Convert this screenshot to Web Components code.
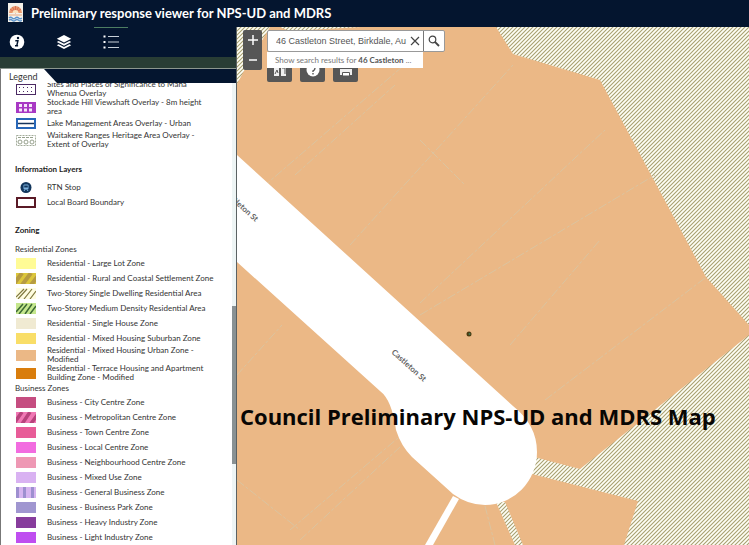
<!DOCTYPE html>
<html lang="en">
<head>
<meta charset="utf-8">
<title>Preliminary response viewer for NPS-UD and MDRS</title>
<style>
html, body { margin: 0; height: 100%; }
body { font-family: Lato, "Open Sans", sans-serif; color: #333; overflow: hidden; }
</style>
</head>
<body>
<map-viewer></map-viewer>
<script>
const define = (name, html, setup) => {
  const template = document.createElement('template');
  template.innerHTML = `<style>*{box-sizing:border-box}button{border:0;padding:0;margin:0;font:inherit;color:inherit;cursor:pointer}</style>` + html;
  customElements.define(name, class extends HTMLElement {
    connectedCallback() {
      if (this.shadowRoot) return;
      this.attachShadow({ mode: 'open' }).append(template.content.cloneNode(true));
      if (setup) setup(this, this.shadowRoot);
    }
  });
};

define('app-header', `
<style>
:host { display: flex; align-items: center; gap: 8px; height: 27px; padding: 0 8px; background: #04152f; color: #fff; }
h1 { margin: 0; font-size: 13px; line-height: 20px; font-weight: 700; white-space: nowrap; padding-bottom: 2px; }
svg { width: 15px; height: 19px; display: block; margin-bottom: 3px; }
</style>
<svg viewBox="0 0 15 19" aria-hidden="true">
  <rect width="15" height="19" fill="#f5f1ea"/>
  <path d="M1 10a6.500 7 0 0 1 13 0z" fill="#eb9a6c"/>
  <path d="M7.500 10V3M7.500 10 2 6M7.500 10 13 6M7.500 10 4.500 4M7.500 10l3-6" stroke="#cf5b4a" stroke-width=".7"/>
  <path d="M4.500 10a3 3 0 0 1 6 0z" fill="#fbe3c0"/>
  <path d="M1 11h13v2H1z" fill="#efcdb4"/>
  <path d="M1 15q1.600-1.500 3.200 0t3.200 0 3.200 0 3.200 0M1 17.200q1.600-1.500 3.200 0t3.200 0 3.200 0 3.200 0" fill="none" stroke="#5b93cc" stroke-width="1.500"/>
</svg>
<h1><slot></slot></h1>`);

define('panel-tabs', `
<style>
:host { display: flex; flex-wrap: nowrap; gap: 13px; height: 30px; background: #04152f; color: #fff; }
button { width: 34px; background: none; display: grid; place-items: center; border-top: 1px solid transparent; }
button[aria-selected=true] { border-top-color: #4d7d62; }
svg { width: 16px; height: 16px; display: block; margin-bottom: 2px; }
</style>
<button role="tab" aria-label="About" aria-selected="false"><svg viewBox="0 0 16 16"><circle cx="8" cy="8" r="7.300" fill="#fff"/><circle cx="9" cy="4" r="1.200" fill="#04152f"/><path d="M6.300 6.800h2.600L7.800 11.700h1.300M6 11.700h1.800" fill="none" stroke="#04152f" stroke-width="1.500"/></svg></button>
<button role="tab" aria-label="Layers" aria-selected="false"><svg viewBox="0 0 16 16" fill="#fff"><path d="M8 1l7.200 3.700L8 8.400.8 4.700z"/><path d="M2.600 7 8 9.800 13.400 7l1.800 1L8 11.700.8 8z"/><path d="M2.600 10.200 8 13l5.400-2.800 1.800 1L8 15 .8 11.200z"/></svg></button>
<button role="tab" aria-label="Legend" aria-selected="true"><svg viewBox="0 0 16 16"><path d="M.5 1.500h2v2h-2zM.5 7h2v2h-2zM.5 12.500h2v2h-2z" fill="#fff"/><path d="M5 2.500h11M5 8h11M5 13.500h11" stroke="#c8d0d8" stroke-width="1.200"/></svg></button>`);

const swatches = {
  places: `<rect x=".5" y=".5" width="19" height="10" fill="#fff" stroke="#4b2a63"/><path d="M3 3.500h15M3 7.500h15" stroke="#4b2a63" stroke-width="1" stroke-dasharray="1 3"/>`,
  stockade: `<rect width="20" height="11" fill="#a838c4"/><path d="M3 2h3v3H3zM8 2h3v3H8zM13 2h3v3h-3zM3 6.500h3v3H3zM8 6.500h3v3H8zM13 6.500h3v3h-3z" fill="#f6e6fa"/>`,
  lake: `<rect x="1" y="1" width="18" height="9" fill="#fff" stroke="#2867b8" stroke-width="2"/><path d="M2 5.500h16" stroke="#16345c" stroke-width="1.500"/>`,
  ranges: `<rect x=".5" y=".5" width="19" height="10" fill="#fff" stroke="#a3ac9a" stroke-dasharray="2 1"/><g fill="none" stroke="#96a08c"><circle cx="4" cy="7" r="2"/><circle cx="10" cy="7" r="2"/><circle cx="16" cy="7" r="2"/><path d="M2 2.500h16" stroke-dasharray="3 1"/></g>`,
  stop: `<circle cx="10" cy="5.500" r="5.500" fill="#12365c"/><rect x="7.500" y="2.500" width="5" height="5" rx="1" fill="#7fb4e0"/><path d="M8.200 3.500h3.600v2H8.200z" fill="#12365c"/><path d="M8 9l1-1.500M12 9l-1-1.500" stroke="#7fb4e0"/>`,
  board: `<rect x="1" y="1" width="18" height="9" fill="#fff" stroke="#5a1a26" stroke-width="2"/>`,
  rural: `<rect width="20" height="11" fill="#dcc63c"/><path d="M-2 11 6 0M6 12 15 0M15 12 22 3" stroke="#b69b42" stroke-width="4"/>`,
  single: `<rect width="20" height="11" fill="#fffde0"/><path d="M0 9 8 1M2 11 11 1M8 11 16 1M14 11l6-8" stroke="#80793f" stroke-width="1.200"/>`,
  medium: `<rect width="20" height="11" fill="#c5e78d"/><path d="M0 9 7 1M3 11 11 1M9 11 16 1M14 11l6-8" stroke="#3d6a35" stroke-width="1.500"/>`,
  metro: `<rect width="20" height="11" fill="#f078b4"/><path d="M-1 10 6 0M6 12 14 0M14 13 22 2" stroke="#b8427c" stroke-width="3.500"/>`,
  general: `<rect width="20" height="11" fill="#d6b4f0"/><path d="M1.500 0v11M8.500 0v11M16.500 0v11" stroke="#9e8fd0" stroke-width="3"/>`
};

define('legend-item', `
<style>
:host { display: grid; grid-template-columns: 20px minmax(0, 1fr); column-gap: 11px; align-items: center; min-height: 15px; }
svg { display: block; width: 20px; height: 11px; }
span { font-size: 8px; line-height: 9px; white-space: pre-line; }
</style>
<svg viewBox="0 0 20 11" aria-hidden="true"></svg><span><slot></slot></span>`, (host, root) => {
  const s = host.getAttribute('swatch');
  root.querySelector('svg').innerHTML = swatches[s] || `<rect width="20" height="11" fill="${s}"/>`;
});

define('legend-group', `
<style>
:host { display: block; }
h2, h3 { margin: 0 0 0 -1px; font-size: 8px; line-height: 13px; font-weight: 400; }
h2 { font-weight: 700; color: #222; }
</style>
<slot></slot>`, (host, root) => {
  const h = document.createElement(host.getAttribute('level') || 'h3');
  h.textContent = host.getAttribute('label');
  root.insertBefore(h, root.querySelector('slot'));
});

define('legend-panel', `
<style>
:host { position: relative; display: flex; min-height: 0; background: #fff; border-left: 1px solid #777; border-top: 1px solid #8c968f; }
.list { flex: 1; min-width: 0; padding: 11px 15px 0; overflow: hidden; }
.layers { margin: 14px 0; }
.zoning { margin-bottom: 6px; }
.tab { position: absolute; inset: 0 0 auto; height: 14px; background: #04152f; }
.tab h2 { margin: 0; width: 56px; height: 14px; padding: 2px 8px 0; background: #fff; clip-path: polygon(0 0, 43px 0, 56px 100%, 0 100%); font-size: 9px; line-height: 12px; font-weight: 400; }
.bar { width: 4px; display: flex; flex-direction: column; background: #eef5f5; }
.bar i:nth-child(1) { flex: 237; }
.bar i:nth-child(2) { flex: 158; background: #899193; }
.bar i:nth-child(3) { flex: 81; }
</style>
<div class="list">
  <legend-item swatch="places">Sites and Places of Significance to Mana
Whenua Overlay</legend-item>
  <legend-item swatch="stockade">Stockade Hill Viewshaft Overlay - 8m height
area</legend-item>
  <legend-item swatch="lake">Lake Management Areas Overlay - Urban</legend-item>
  <legend-item swatch="ranges">Waitakere Ranges Heritage Area Overlay -
Extent of Overlay</legend-item>
  <legend-group class="layers" level="h2" label="Information Layers">
    <div style="height:4px"></div>
    <legend-item swatch="stop">RTN Stop</legend-item>
    <legend-item swatch="board">Local Board Boundary</legend-item>
  </legend-group>
  <legend-group class="zoning" level="h2" label="Zoning"></legend-group>
  <legend-group label="Residential Zones">
    <legend-item swatch="#fffb96">Residential - Large Lot Zone</legend-item>
    <legend-item swatch="rural">Residential - Rural and Coastal Settlement Zone</legend-item>
    <legend-item swatch="single">Two-Storey Single Dwelling Residential Area</legend-item>
    <legend-item swatch="medium">Two-Storey Medium Density Residential Area</legend-item>
    <legend-item swatch="#f0ead2">Residential - Single House Zone</legend-item>
    <legend-item swatch="#f9de68">Residential - Mixed Housing Suburban Zone</legend-item>
    <legend-item swatch="#ebb886">Residential - Mixed Housing Urban Zone -
Modified</legend-item>
    <legend-item swatch="#d97d0c">Residential - Terrace Housing and Apartment
Building Zone - Modified</legend-item>
  </legend-group>
  <legend-group label="Business Zones">
    <legend-item swatch="#c54d80">Business - City Centre Zone</legend-item>
    <legend-item swatch="metro">Business - Metropolitan Centre Zone</legend-item>
    <legend-item swatch="#e85c98">Business - Town Centre Zone</legend-item>
    <legend-item swatch="#f26ce0">Business - Local Centre Zone</legend-item>
    <legend-item swatch="#ee98b4">Business - Neighbourhood Centre Zone</legend-item>
    <legend-item swatch="#d9b2f2">Business - Mixed Use Zone</legend-item>
    <legend-item swatch="general">Business - General Business Zone</legend-item>
    <legend-item swatch="#a096d0">Business - Business Park Zone</legend-item>
    <legend-item swatch="#873c9c">Business - Heavy Industry Zone</legend-item>
    <legend-item swatch="#bf4ef0">Business - Light Industry Zone</legend-item>
  </legend-group>
</div>
<div class="bar" aria-hidden="true"><i></i><i></i><i></i></div>
<div class="tab"><h2>Legend</h2></div>`);

define('zone-map', `
<style>
:host { display: block; position: absolute; inset: 0; }
svg { display: block; width: 100%; height: 100%; }
.street { font: 700 8px Lato, sans-serif; fill: #666; }
.caption { font: 700 22px "Open Sans", "Noto Sans", sans-serif; fill: #080604; }
</style>
<svg viewBox="237 27 512 518" preserveAspectRatio="xMinYMin slice">
  <defs><pattern id="hatch" width="4" height="4" patternUnits="userSpaceOnUse"><rect width="4" height="4" fill="#fffff6"/><path d="M-1 1 1-1M-1 5 5-1M3 5 5 3" stroke="#a8a071" stroke-width="1.100"/></pattern></defs>
  <rect x="237" y="27" width="512" height="518" fill="#ebb886"/>
  <g fill="url(#hatch)">
    <path d="M237 27h33l-26 44-7 13zM280 27h81l-72 4z"/>
    <path d="M496 27l17 27 87 26 106 197 43 48V27z"/>
    <path d="M749 335 580 469l-46-12-2 17 106 27-14 44h125z"/>
    <path d="M496 502h9l18 43h-8z"/>
  </g>
  <g fill="none" stroke="#dbc4a0" stroke-width="1" stroke-dasharray="9 2 3 2">
    <path d="M263 187 410 60M295 175 395 85M350 245 513 65M420 303 605 130M420 315 655 175M510 345 600 240M545 400 705 278M237 375 282 325M290 530 398 438M300 540 400 447M237 480 300 530M420 140 465 185M485 506l10 39"/>
  </g>
  <path fill="#fff" d="M237 155 513 406Q537 425 537 452A52 53 0 0 1 485 505Q468 505 453 494L412 457Q401 446 396 430Q392 400 380 391L237 262z"/>
  <path fill="#fff" d="M453 496 459 499 433 545H425z"/>
  <text class="street" transform="translate(391 353) rotate(42)">Castleton St</text>
  <text class="street" transform="translate(223 193) rotate(42)">Castleton St</text>
  <circle cx="469" cy="334" r="2.500" fill="#4a3b12"/><circle cx="469.500" cy="334" r="1" fill="#3f7b55"/>
  <text class="caption" x="240" y="425">Council Preliminary NPS-UD and MDRS Map</text>
</svg>`);

define('zoom-control', `
<style>
:host { display: flex; flex-direction: column; width: 19px; height: 40px; border-radius: 2px; overflow: hidden; background: #565656; }
button { flex: 1; background: none; display: grid; place-items: center; }
svg { width: 10px; height: 10px; display: block; }
path { stroke: #fff; stroke-width: 1.500; }
</style>
<button aria-label="Zoom in"><svg viewBox="0 0 10 10"><path d="M0 5h10M5 0v10"/></svg></button>
<button aria-label="Zoom out"><svg viewBox="0 0 10 10"><path d="M1 5h8"/></svg></button>`);

define('map-search', `
<style>
:host { display: block; width: 178px; }
form { display: flex; height: 22px; margin: 0; border: 1px solid #999; border-radius: 2px; background: #fff; }
input { flex: 1; min-width: 0; border: 0; outline: 0; padding: 0 0 0 8px; background: none; font: 9px "Liberation Sans", Arial, sans-serif; color: #555; }
.clear { width: 16px; background: none; }
.go { width: 21px; background: none; border-left: 1px solid #777; }
svg { display: block; margin: auto; width: 12px; height: 12px; fill: none; stroke: #444; }
.hint { display: block; width: 156px; height: 16px; padding: 0 8px; background: #fff; font-size: 8px; line-height: 16px; text-align: left; white-space: nowrap; color: #777; }
b { color: #555; }
</style>
<form role="search">
  <input type="text" aria-label="Find address or place" value="46 Castleton Street, Birkdale, Au">
  <button class="clear" type="button" aria-label="Clear"><svg viewBox="0 0 12 12"><path d="m2 2 8 8m0-8-8 8" stroke-width="1.200"/></svg></button>
  <button class="go" type="button" aria-label="Search"><svg viewBox="0 0 12 12"><circle cx="4.500" cy="4.500" r="3.300" stroke-width="1.200"/><path d="m6.900 6.900 4.100 4.100" stroke-width="1.900"/></svg></button>
</form>
<button class="hint" type="button">Show search results for <b>46 Castleton</b> ...</button>`);

define('tool-buttons', `
<style>
:host { display: flex; gap: 8px; }
button { width: 25px; height: 25px; background: #565656; border-radius: 2px; display: grid; place-items: center; }
svg { display: block; width: 14px; height: 14px; }
</style>
<button aria-label="Compare"><svg viewBox="0 0 14 14"><path d="M1 1h5v12H1zM8 1h5v12H8z" fill="#eee"/><path d="m2 11 2-4 1 3M9 5h3v6" fill="none" stroke="#565656"/></svg></button>
<button aria-label="Help"><svg viewBox="0 0 14 14"><circle cx="7" cy="7" r="6.500" fill="#fff"/><path d="M5 5q0-2 2-2t2 2-2 3v1M7 10v1.500" fill="none" stroke="#565656" stroke-width="1.400"/></svg></button>
<button aria-label="Print"><svg viewBox="0 0 14 14"><path d="M3 1h8v4H3zM1 6h12v6H1z" fill="#eee"/><path d="M3.500 9.500h7v3.500h-7z" fill="#fff" stroke="#565656"/></svg></button>`);

define('map-viewer', `
<style>
:host { display: flex; flex-direction: column; height: 100vh; }
main { flex: 1; min-height: 0; display: grid; grid-template-columns: 237px minmax(0, 1fr); }
aside { display: grid; grid-template-rows: auto 11px minmax(0, 1fr); min-height: 0; border-right: 1px solid #5b6263; background: #293d35; }
section { position: relative; overflow: hidden; padding: 3px 6px; }
.overlay { position: relative; display: flex; gap: 5px; align-items: flex-start; }
.finder { display: grid; grid-template-rows: 30px auto; }
map-search { position: relative; z-index: 1; }
.finder tool-buttons { margin-top: -3px; }
</style>
<app-header>Preliminary response viewer for NPS-UD and MDRS</app-header>
<main>
  <aside><panel-tabs role="tablist"></panel-tabs><div></div><legend-panel></legend-panel></aside>
  <section aria-label="Map">
    <zone-map></zone-map>
    <div class="overlay"><zoom-control></zoom-control><div class="finder"><map-search></map-search><tool-buttons></tool-buttons></div></div>
  </section>
</main>`);
</script>
</body>
</html>
